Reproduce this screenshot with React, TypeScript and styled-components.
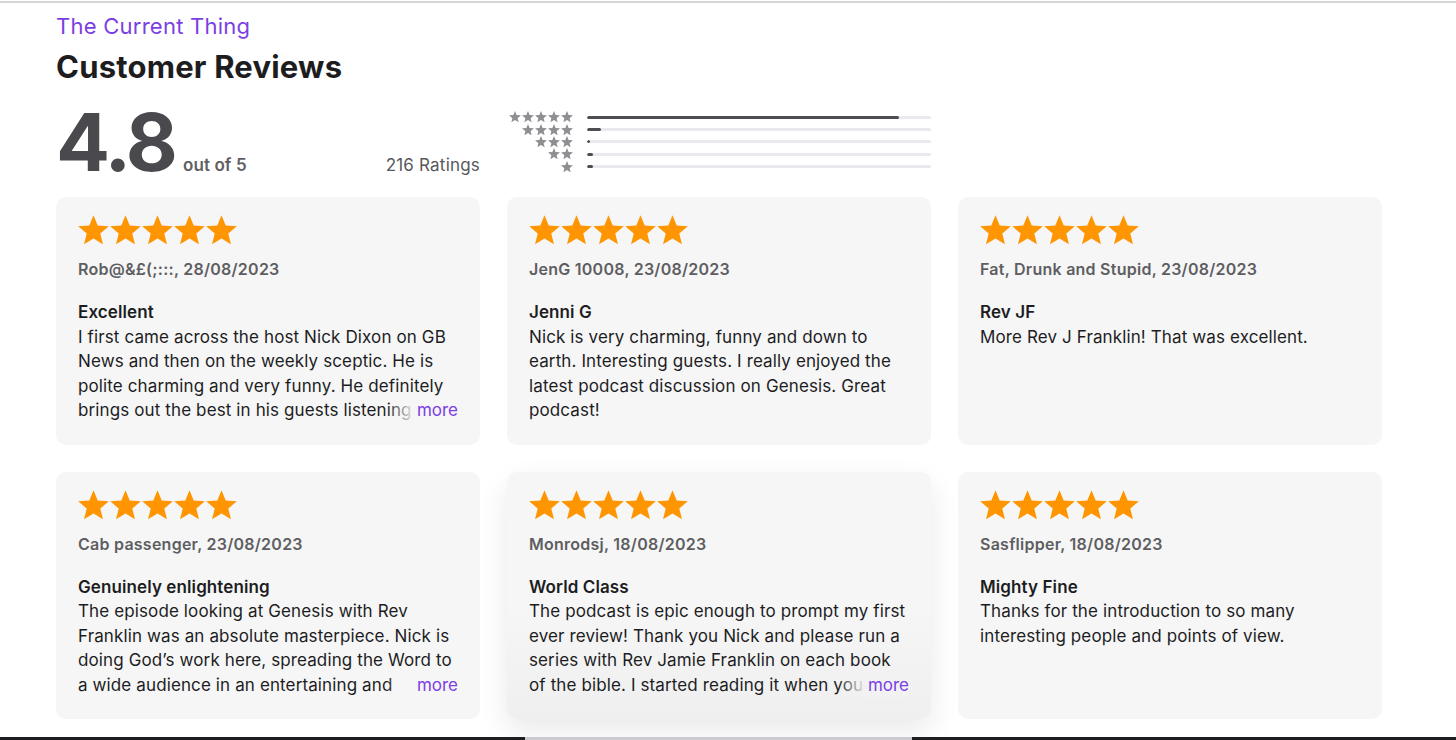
import React from "react";
import styled, { createGlobalStyle, css } from "styled-components";

const GlobalStyle = createGlobalStyle`
  html, body { margin: 0; padding: 0; background: #ffffff; }
  body {
    font-family: Inter, "Noto Sans", "Liberation Sans", sans-serif;
    -webkit-font-smoothing: antialiased;
    overflow: hidden;
  }
  * { box-sizing: border-box; }
`;

const PURPLE = "#7b3fe4";
const CARD_BG = "#f6f6f6";

const Page = styled.div`
  display: flex;
  flex-direction: column;
  min-height: 740px;
  padding-top: 1px;
`;

const TopRule = styled.div`
  height: 2px;
  background: #d5d5d7;
`;

const Content = styled.main`
  padding: 9px 0 0 56px;
`;

const Eyebrow = styled.div`
  font-size: 22px;
  line-height: 28px;
  color: ${PURPLE};
  letter-spacing: 0.25px;
`;

const Heading = styled.h1`
  margin: 9px 0 0;
  font-size: 31px;
  line-height: 36px;
  font-weight: 700;
  color: #1d1d1f;
  letter-spacing: 0.2px;
`;

const Columns = styled.div`
  display: grid;
  grid-template-columns: repeat(3, 424px);
  column-gap: 27px;
`;

const SummaryRow = styled(Columns)`
  margin-top: 17px;
`;

const Score = styled.div`
  display: flex;
  align-items: baseline;
  justify-content: space-between;
`;

const ScoreMain = styled.div`
  display: flex;
  align-items: baseline;
  gap: 8px;
`;

const ScoreValue = styled.span`
  font-size: 80px;
  line-height: 80px;
  font-weight: 700;
  color: #4a4a4e;
  letter-spacing: -3px;
`;

const OutOf = styled.span`
  font-size: 17px;
  font-weight: 600;
  color: #5f5f63;
  letter-spacing: 0.1px;
`;

const RatingsCount = styled.span`
  font-size: 17px;
  color: #58585c;
  letter-spacing: 0.2px;
`;

const Histogram = styled.div`
  padding-top: 9px;
  display: flex;
  flex-direction: column;
`;

const HistRow = styled.div`
  display: grid;
  grid-template-columns: 66px 1fr;
  column-gap: 14px;
  align-items: center;
  height: 12.3px;
`;

const HistStars = styled.div`
  display: flex;
  justify-content: flex-end;
  gap: 1px;
`;

const Track = styled.div`
  height: 3px;
  border-radius: 2px;
  background: #eaeaee;
  overflow: hidden;
`;

const Fill = styled.div`
  height: 100%;
  background: #4e4e52;
  border-radius: 2px;
`;

const CardsGrid = styled(Columns)`
  margin-top: 15px;
  row-gap: 27px;
`;

const Card = styled.article<{ $raised?: boolean }>`
  background: ${CARD_BG};
  border-radius: 10px;
  padding: 18px 22px 22px;
  display: flex;
  flex-direction: column;
  ${(p) =>
    p.$raised &&
    css`
      background: linear-gradient(${CARD_BG} 55%, #efefef);
      box-shadow: 0 12px 30px rgba(0, 0, 0, 0.09);
    `}
`;

const StarRow = styled.div`
  display: flex;
  gap: 1px;
  height: 31px;
`;

const Author = styled.div`
  margin-top: 13px;
  font-size: 16px;
  line-height: 20px;
  font-weight: 600;
  color: #5e5e62;
  letter-spacing: 0.25px;
`;

const Title = styled.div`
  margin-top: 21px;
  font-size: 17px;
  line-height: 24.5px;
  font-weight: 600;
  color: #1d1d1f;
  letter-spacing: 0.1px;
`;

const BodyWrap = styled.div`
  position: relative;
`;

const Body = styled.p`
  margin: 0;
  font-size: 17px;
  line-height: 24.5px;
  color: #1d1d1f;
  max-height: 98px;
  overflow: hidden;
  letter-spacing: 0.12px;
`;

const More = styled.span<{ $bg: string }>`
  position: absolute;
  right: 0;
  bottom: 0;
  padding-left: 30px;
  font-size: 17px;
  line-height: 24.5px;
  color: ${PURPLE};
  background: linear-gradient(to right, rgba(246, 246, 246, 0), ${(p) => p.$bg} 28px);
`;

const BottomStrip = styled.div`
  margin-top: auto;
  height: 3px;
  display: grid;
  grid-template-columns: 525px 387px 1fr;
`;

const StripPart = styled.div<{ $light?: boolean }>`
  background: ${(p) => (p.$light ? "#cbcbcf" : "#1e1e20")};
`;

function starPoints(cx: number, cy: number, R: number, r: number) {
  const pts: string[] = [];
  for (let i = 0; i < 10; i++) {
    const rad = i % 2 === 0 ? R : r;
    const a = -Math.PI / 2 + (i * Math.PI) / 5;
    pts.push(`${(cx + rad * Math.cos(a)).toFixed(2)},${(cy + rad * Math.sin(a)).toFixed(2)}`);
  }
  return pts.join(" ");
}

const STAR = starPoints(50, 52.5, 52, 23);

const Star: React.FC<{ size: number; color: string }> = ({ size, color }) => (
  <svg width={size} height={size * 0.97} viewBox="0 0 100 97" aria-hidden>
    <polygon points={STAR} fill={color} />
  </svg>
);

const histogram = [
  { stars: 5, pct: 90.7 },
  { stars: 4, pct: 4 },
  { stars: 3, pct: 0.8 },
  { stars: 2, pct: 1.8 },
  { stars: 1, pct: 1.8 },
];

type Review = {
  author: string;
  date: string;
  title: string;
  body: string;
  truncated?: boolean;
};

const reviews: Review[] = [
  {
    author: "Rob@&£(;:::",
    date: "28/08/2023",
    title: "Excellent",
    body:
      "I first came across the host Nick Dixon on GB News and then on the weekly sceptic. He is polite charming and very funny. He definitely brings out the best in his guests listening",
    truncated: true,
  },
  {
    author: "JenG 10008",
    date: "23/08/2023",
    title: "Jenni G",
    body:
      "Nick is very charming, funny and down to earth. Interesting guests. I really enjoyed the latest podcast discussion on Genesis. Great podcast!",
  },
  {
    author: "Fat, Drunk and Stupid",
    date: "23/08/2023",
    title: "Rev JF",
    body: "More Rev J Franklin! That was excellent.",
  },
  {
    author: "Cab passenger",
    date: "23/08/2023",
    title: "Genuinely enlightening",
    body:
      "The episode looking at Genesis with Rev Franklin was an absolute masterpiece. Nick is doing God’s work here, spreading the Word to a wide audience in an entertaining and",
    truncated: true,
  },
  {
    author: "Monrodsj",
    date: "18/08/2023",
    title: "World Class",
    body:
      "The podcast is epic enough to prompt my first ever review! Thank you Nick and please run a series with Rev Jamie Franklin on each book of the bible. I started reading it when you",
    truncated: true,
  },
  {
    author: "Sasflipper",
    date: "18/08/2023",
    title: "Mighty Fine",
    body: "Thanks for the introduction to so many interesting people and points of view.",
  },
];

export default function App() {
  return (
    <>
      <GlobalStyle />
      <Page>
        <TopRule />
        <Content>
          <Eyebrow>The Current Thing</Eyebrow>
          <Heading>Customer Reviews</Heading>
          <SummaryRow>
            <Score>
              <ScoreMain>
                <ScoreValue>4.8</ScoreValue>
                <OutOf>out of 5</OutOf>
              </ScoreMain>
              <RatingsCount>216 Ratings</RatingsCount>
            </Score>
            <Histogram>
              {histogram.map((h) => (
                <HistRow key={h.stars}>
                  <HistStars>
                    {Array.from({ length: h.stars }).map((_, i) => (
                      <Star key={i} size={12} color="#8e8e93" />
                    ))}
                  </HistStars>
                  <Track>
                    <Fill style={{ width: `${h.pct}%` }} />
                  </Track>
                </HistRow>
              ))}
            </Histogram>
          </SummaryRow>
          <CardsGrid>
            {reviews.map((r, idx) => {
              const raised = idx === 4;
              return (
                <Card key={idx} $raised={raised}>
                  <StarRow>
                    {Array.from({ length: 5 }).map((_, i) => (
                      <Star key={i} size={31} color="#ff9500" />
                    ))}
                  </StarRow>
                  <Author>
                    {r.author}, {r.date}
                  </Author>
                  <Title>{r.title}</Title>
                  <BodyWrap>
                    <Body>{r.body}</Body>
                    {r.truncated && <More $bg={raised ? "#f2f2f2" : CARD_BG}>more</More>}
                  </BodyWrap>
                </Card>
              );
            })}
          </CardsGrid>
        </Content>
        <BottomStrip>
          <StripPart />
          <StripPart $light />
          <StripPart />
        </BottomStrip>
      </Page>
    </>
  );
}
